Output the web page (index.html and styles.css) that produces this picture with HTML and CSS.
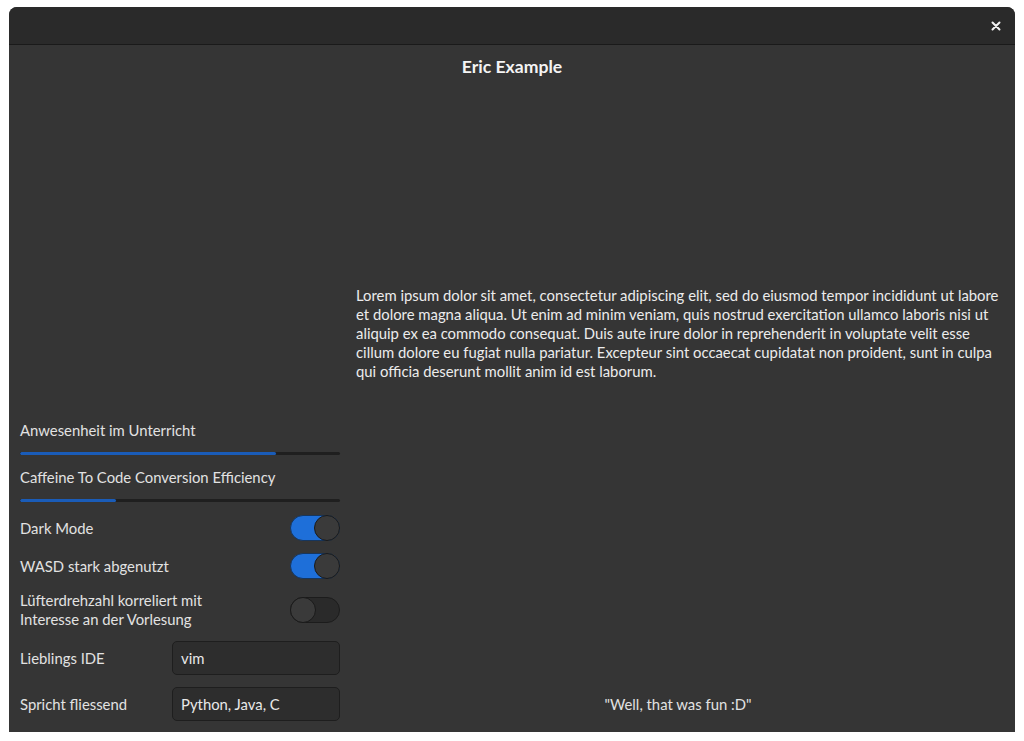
FILE: index.html
```html
<!DOCTYPE html>
<html>
<head>
<meta charset="utf-8">
<link rel="stylesheet" href="styles.css">
</head>
<body>
<div class="window">
  <header class="headerbar">
    <button class="close" aria-label="Close">
      <svg width="10" height="10" viewBox="0 0 10 10"><path d="M1.5 1.5 L8.5 8.5 M8.5 1.5 L1.5 8.5" stroke="#f2f2f2" stroke-width="2" stroke-linecap="round"/></svg>
    </button>
  </header>
  <main class="content">
    <h1 class="title">Eric Example</h1>
    <div class="columns">
      <section class="form">
        <div class="label">Anwesenheit im Unterricht</div>
        <div class="bar"><div class="fill" style="width:80%"></div></div>
        <div class="label">Caffeine To Code Conversion Efficiency</div>
        <div class="bar"><div class="fill" style="width:30%"></div></div>
        <div class="row">
          <span class="label">Dark Mode</span>
          <span class="switch on"><span class="knob"></span></span>
        </div>
        <div class="row">
          <span class="label">WASD stark abgenutzt</span>
          <span class="switch on"><span class="knob"></span></span>
        </div>
        <div class="row">
          <span class="label">Lüfterdrehzahl korreliert mit<br>Interesse an der Vorlesung</span>
          <span class="switch"><span class="knob"></span></span>
        </div>
        <div class="row">
          <span class="label">Lieblings IDE</span>
          <span class="entry">vim</span>
        </div>
        <div class="row">
          <span class="label">Spricht fliessend</span>
          <span class="entry">Python, Java, C</span>
        </div>
      </section>
      <section class="side">
        <p class="lorem">Lorem ipsum dolor sit amet, consectetur adipiscing elit, sed do eiusmod tempor incididunt ut labore et dolore magna aliqua. Ut enim ad minim veniam, quis nostrud exercitation ullamco laboris nisi ut aliquip ex ea commodo consequat. Duis aute irure dolor in reprehenderit in voluptate velit esse cillum dolore eu fugiat nulla pariatur. Excepteur sint occaecat cupidatat non proident, sunt in culpa qui officia deserunt mollit anim id est laborum.</p>
        <p class="quote">"Well, that was fun :D"</p>
      </section>
    </div>
  </main>
</div>
</body>
</html>
```
FILE: styles.css
```css
html, body {
  margin: 0;
  padding: 0;
  background: #ffffff;
}
body {
  padding: 7px 0 0 9px;
  font-family: Lato, "Noto Sans", sans-serif;
  font-size: 14.85px;
  line-height: 19px;
  color: #e4e4e4;
}
.window {
  width: 1006px;
  height: 725px;
  background: #353535;
  border-radius: 8px 8px 0 0;
  overflow: hidden;
  display: flex;
  flex-direction: column;
}
.headerbar {
  height: 37px;
  background: #2a2a2a;
  border-bottom: 1px solid #1a1a1a;
  display: flex;
  align-items: center;
  justify-content: flex-end;
  padding-right: 9px;
  flex-shrink: 0;
}
.close {
  background: none;
  border: none;
  padding: 0;
  width: 20px;
  height: 20px;
  display: flex;
  align-items: center;
  justify-content: center;
}
.content {
  flex: 1;
  display: flex;
  flex-direction: column;
  padding: 12px 15px 11px 11px;
  min-height: 0;
}
.title {
  margin: 0;
  text-align: center;
  font-size: 17.6px;
  font-weight: 700;
  line-height: 20px;
  color: #f4f4f4;
  padding-left: 4px;
}
.columns {
  flex: 1;
  display: grid;
  grid-template-columns: 320px 1fr;
  column-gap: 16px;
}
.form {
  display: flex;
  flex-direction: column;
  justify-content: flex-end;
  gap: 12px;
}
.label {
  color: #e2e2e2;
}
.bar {
  height: 3px;
  margin-bottom: 1px;
  background: #1f1f1f;
  border-radius: 2px;
  overflow: hidden;
}
.fill {
  height: 100%;
  background: #1a5cb8;
  border-radius: 2px;
}
.row {
  display: flex;
  align-items: center;
  justify-content: space-between;
}
.switch {
  box-sizing: border-box;
  width: 50px;
  height: 26px;
  border-radius: 13px;
  background: #2a2a2a;
  border: 1px solid #1c1c1c;
  display: flex;
  align-items: center;
  justify-content: flex-start;
}
.switch.on {
  background: #1e6fd9;
  border-color: #16365e;
  justify-content: flex-end;
}
.knob {
  box-sizing: border-box;
  width: 26px;
  height: 26px;
  margin: -1px;
  border-radius: 50%;
  background: #3a3a3a;
  border: 1px solid #1a1a1a;
}
.entry {
  box-sizing: border-box;
  width: 168px;
  height: 34px;
  background: #2d2d2d;
  border: 1px solid #1e1e1e;
  border-radius: 5px;
  padding: 0 8px;
  display: flex;
  align-items: center;
  color: #e8e8e8;
}
.side {
  display: flex;
  flex-direction: column;
  width: 644px;
}
.lorem {
  margin: 0;
  padding-top: 209px;
  color: #ececec;
}
.quote {
  margin: auto 0 7px;
  text-align: center;
  color: #e2e2e2;
}
```
